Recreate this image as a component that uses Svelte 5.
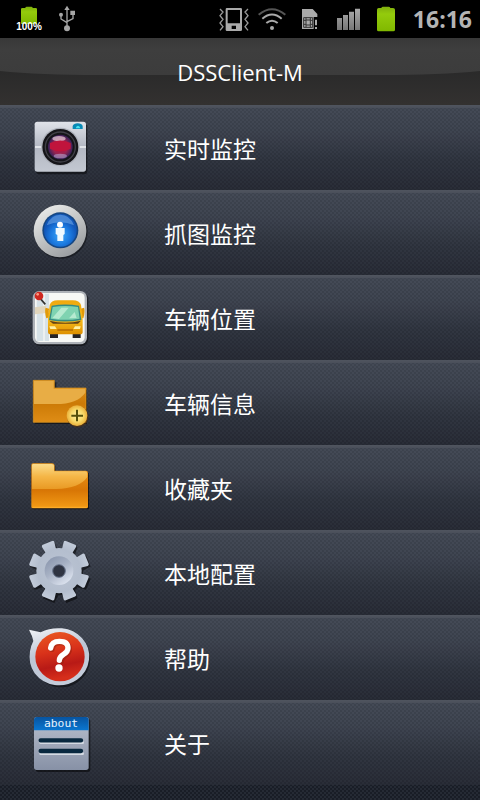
<script>
  const items = [
    { icon: "camera", label: "实时监控" },
    { icon: "info", label: "抓图监控" },
    { icon: "bus", label: "车辆位置" },
    { icon: "folder-add", label: "车辆信息" },
    { icon: "folder", label: "收藏夹" },
    { icon: "gear", label: "本地配置" },
    { icon: "help", label: "帮助" },
    { icon: "about", label: "关于" },
  ];

  const teeth = [22.5, 67.5, 112.5, 157.5, 202.5, 247.5, 292.5, 337.5];
</script>

<div class="screen">
  <header class="status">
    <div class="battery-level">
      <svg viewBox="30 0 114 114">
        <path d="M63 27q0-3 4-3h9q0-4 4-4h14q4 0 4 4h9q4 0 4 3v45H63z" fill="url(#green)" />
      </svg>
      <span>100%</span>
    </div>
    <svg viewBox="144 0 114 114" aria-label="USB">
      <g fill="none" stroke="#a6a6a6" stroke-width="4">
        <path d="M201 82V27M201 68L183 57V47M201 65L219 56V42" />
      </g>
      <path d="M201 17l8 13h-16zM211 32h14v13h-14z" fill="#a6a6a6" />
      <circle cx="183" cy="44" r="6" fill="#a6a6a6" />
      <circle cx="201" cy="85" r="9" fill="#a6a6a6" />
    </svg>

    <div class="spacer"></div>

    <!-- vibrate -->
    <svg viewBox="12 0 114 114">
      <path
        d="M48 24h41q4 0 4 4v61q0 4-4 4H48q-4 0-4-4V28q0-4 4-4zM50 30v40h37V30zM62 77v10h13V77z"
        fill="#aaa" fill-rule="evenodd"
      />
      <path
        d="M27 27l9 9-9 11 9 11-9 11 9 11-9 11M111 27l-9 9 9 11-9 11 9 11-9 11 9 11"
        fill="none" stroke="#999" stroke-width="4"
      />
    </svg>
    <!-- wifi -->
    <svg viewBox="126 0 114 114">
      <g fill="none" stroke-width="6">
        <path d="M143 44q40-33 80 0" stroke="#555" />
        <path d="M154 56q29-25 58 0" stroke="#aaa" />
        <path d="M166 69q17-14 34 0" stroke="#aaa" />
      </g>
      <circle cx="183" cy="84" r="6" fill="#aaa" />
    </svg>
    <!-- sim -->
    <svg viewBox="240 0 114 114">
      <path d="M273 27h32l14 15v9h-11v36h-35z" fill="#aaa" />
      <path d="M278 53h27v29h-27zM285 53v29M298 53v29M278 61h7M278 73h7M298 61h7M298 73h7M285 60h13M285 75h13" fill="none" stroke="#333" stroke-width="3" />
      <path d="M312 59h6v17h-6zM312 81h6v6h-6z" fill="#aaa" />
    </svg>
    <!-- signal -->
    <svg viewBox="354 0 114 114">
      <path d="M378 54h15v36h-15zM396 45h15v45h-15zM414 35h15v55h-15zM432 26h15v64h-15z" fill="url(#bars)" />
    </svg>
    <!-- battery -->
    <svg viewBox="468 0 114 114">
      <path d="M498 29q0-5 5-5h8q1-4 5-4h17q4 0 5 4h8q6 0 6 5v60q0 5-5 5h-44q-5 0-5-5z" fill="url(#green)" />
    </svg>
    <time>16:16</time>
  </header>

  <div class="title">
    <svg class="sheen" viewBox="0 0 480 67" preserveAspectRatio="none">
      <path d="M0 0H480V33Q440 37 380 37H100Q40 37 0 33z" fill="url(#sheen)" />
    </svg>
    <h1>DSSClient-M</h1>
  </div>

  <nav>
    {#each items as item}
      <button class="row" type="button">
        <svg class="icon" viewBox="0 0 270 255">
          {#if item.icon === "camera"}
            <rect x="48" y="56" width="154" height="152" rx="9" fill="#000" opacity="0.45" />
            <rect x="44" y="50" width="154" height="150" rx="8" fill="url(#silver)" />
            <path d="M45 126h30M170 126h28" stroke="#f0f2f5" stroke-width="5" />
            <path d="M158 72V63q3-8 15-8t15 8v9z" fill="#0789b5" />
            <path d="M167 70q2-8 7-8t7 8z" fill="#49e4f0" />
            <circle cx="121" cy="126" r="58" fill="#aeb2bb" />
            <circle cx="121" cy="126" r="54" fill="#151519" />
            <circle cx="121" cy="126" r="45" fill="none" stroke="#414148" stroke-width="4" />
            <circle cx="121" cy="126" r="37" fill="url(#lens)" />
            <ellipse cx="117" cy="101" rx="20" ry="8" fill="#ead5df" opacity="0.7" />
            <path d="M90 114q31-15 62 0v17q-31 16-62 0z" fill="#c0143c" />
            <ellipse cx="121" cy="153" rx="20" ry="7" fill="#b9a3ce" opacity="0.6" />
          {:else if item.icon === "info"}
            <circle cx="123" cy="126" r="80" fill="#000" opacity="0.4" />
            <circle cx="120" cy="123" r="79" fill="url(#ring)" />
            <circle cx="121" cy="121" r="54" fill="#164783" />
            <circle cx="121" cy="121" r="49" fill="url(#blue)" />
            <path d="M80 106q12-32 41-32t41 32q-41-19-82 0z" fill="#9ad0ff" opacity="0.4" />
            <circle cx="120" cy="104" r="9" fill="#fff" />
            <path d="M107 114h27v18l-4 3v18h-18v-18l-5-3z" fill="#effaff" />
          {:else if item.icon === "bus"}
            <rect x="41" y="53" width="164" height="160" rx="20" fill="#000" opacity="0.45" />
            <rect x="38" y="48" width="163" height="160" rx="20" fill="#aeb2b8" />
            <rect x="45" y="54" width="149" height="147" rx="14" fill="#f7f8f5" />
            <path d="M50 56h20v142H50zM74 56h13v142H74z" fill="#d7e2e7" />
            <path d="M45 97l34-5v22l-34 4z" fill="#e1d6bd" />
            <path d="M82 100q-3 10 2 28M187 100q3 10-2 28" fill="none" stroke="#e29a08" stroke-width="11" />
            <path d="M90 170h24v19H90zM158 170h24v19h-24z" fill="#252326" />
            <path d="M89 90q4-14 24-14h45q21 0 25 14l5 42v39q0 7-8 7H92q-8 0-8-7v-39z" fill="url(#bus)" />
            <path d="M95 92q40-7 82 0l7 43q-49 9-97 0z" fill="#358b84" />
            <path d="M98 96q38-6 76 0l5 35q-43 7-87 0z" fill="#7fd3b1" />
            <path d="M97 129l27-31h22l-29 34zM147 130l17-19 6 18z" fill="#b6ead0" />
            <path d="M88 137q48 12 95 0l-9 9H99z" fill="#634215" />
            <path d="M88 154h17l5 8H91zM182 154h-17l-5 8h20z" fill="#fff1a5" />
            <path d="M112 165h47" stroke="#ae6500" stroke-width="4" />
            <path d="M61 71l15 17" stroke="#333" stroke-width="5" />
            <circle cx="57" cy="63" r="13" fill="#cf2820" />
            <circle cx="53" cy="58" r="4" fill="#ff9b80" />
          {:else if item.icon === "folder-add"}
            <path d="M44 67h65v23h92v102H44z" fill="#000" opacity="0.5" />
            <path d="M40 61h63v23h95v103H40z" fill="url(#flat)" stroke="#e39a20" stroke-width="2" />
            <path d="M42 63h59v23h95v12q-24 34-88 34H42z" fill="#e8ad45" />
            <circle cx="173" cy="170" r="32" fill="#59320a" opacity="0.6" />
            <circle cx="171" cy="167" r="31" fill="url(#gold)" />
            <path d="M154 167h35M171 149v35" stroke="#55500b" stroke-width="6" />
          {:else if item.icon === "folder"}
            <path d="M37 64h69v20h101v109H37z" fill="#000" opacity="0.55" />
            <path d="M34 60q0-5 5-5h57q7 0 8 7v15h93q7 0 7 7v101q0 5-5 5H39q-5 0-5-5z" fill="url(#folder)" />
            <path d="M36 61q0-4 4-4h54q8 0 8 7v15h93q7 0 7 7v10q-23 34-94 36H36z" fill="url(#folder-shine)" />
            <path d="M38 187h162" stroke="#ffb02d" stroke-width="3" />
          {:else if item.icon === "gear"}
            <g opacity="0.5">
              <circle cx="121" cy="128" r="68" />
              {#each teeth as angle}
                <path d="M100 70l3-33h36l3 33z" transform="rotate({angle} 121 128)" />
              {/each}
            </g>
            <g fill="url(#gear)">
              {#each teeth as angle}
                <path
                  d="M92 76l8-20-3-19q0-5 5-5h30q5 0 5 5l-3 19 8 20z"
                  transform="rotate({angle} 117 122)"
                />
              {/each}
              <circle cx="117" cy="122" r="68" />
            </g>
            <circle cx="117" cy="122" r="43" fill="url(#hub)" />
            <circle cx="117" cy="123" r="19" fill="#2f3442" />
            <circle cx="117" cy="123" r="19" fill="none" stroke="#68748c" stroke-width="3" />
          {:else if item.icon === "help"}
            <circle cx="124" cy="130" r="87" fill="#000" opacity="0.45" />
            <path d="M27 44l35 8q29-15 64-12 36 4 60 29 26 29 21 65-5 38-36 60-31 21-67 16-37-5-60-35-20-28-14-66 3-18 10-31-3-16-13-34z" fill="url(#bubble)" />
            <circle cx="120" cy="125" r="74" fill="url(#red)" />
            <g fill="none" stroke-width="16" stroke-linecap="round">
              <path d="M96 103q3-20 26-20 26 0 26 20 0 11-13 19-12 8-12 18" stroke="#8d1d0e" opacity="0.5" />
              <path d="M92 99q3-20 26-20 26 0 26 20 0 11-13 19-13 8-13 18" stroke="#fff" />
            </g>
            <circle cx="117" cy="159" r="11" fill="#fff" />
          {:else}
            <rect x="47" y="57" width="164" height="159" rx="8" fill="#000" opacity="0.5" />
            <rect x="42" y="51" width="164" height="159" rx="8" fill="url(#panel)" />
            <path d="M42 91V59q0-8 8-8h148q8 0 8 8v32z" fill="url(#tab)" />
            <text x="123" y="81" text-anchor="middle">about</text>
            <path d="M62 128h126M62 161h126" stroke="#d4dae3" stroke-width="8" stroke-linecap="round" />
            <path d="M62 121h121M62 153h121" stroke="#08283f" stroke-width="13" stroke-linecap="round" />
          {/if}
        </svg>
        <span class="label">{item.label}</span>
      </button>
    {/each}
  </nav>

  <!-- shared gradients -->
  <svg class="defs" aria-hidden="true">
    <defs>
      <linearGradient id="green" x2="0" y2="1">
        <stop stop-color="#7fae0c" /><stop offset="0.3" stop-color="#94cb0c" /><stop offset="1" stop-color="#80b800" />
      </linearGradient>
      <linearGradient id="bars" x2="0" y2="1">
        <stop stop-color="#aaa" /><stop offset="1" stop-color="#777" />
      </linearGradient>
      <linearGradient id="sheen" x2="0" y2="1">
        <stop stop-color="#383838" /><stop offset="0.3" stop-color="#3e3e3e" /><stop offset="1" stop-color="#3c3c3c" />
      </linearGradient>
      <linearGradient id="silver" x2="0" y2="1">
        <stop stop-color="#e0e3e9" /><stop offset="0.5" stop-color="#b3b8c3" /><stop offset="1" stop-color="#c3c8d1" />
      </linearGradient>
      <radialGradient id="lens">
        <stop stop-color="#b31242" /><stop offset="0.6" stop-color="#9a2451" /><stop offset="1" stop-color="#37225a" />
      </radialGradient>
      <linearGradient id="ring" x2="0.6" y2="1">
        <stop stop-color="#f4f4f2" /><stop offset="0.55" stop-color="#c4c6c6" /><stop offset="1" stop-color="#9c9fa2" />
      </linearGradient>
      <radialGradient id="blue" cy="0.65">
        <stop stop-color="#3ca9fa" /><stop offset="0.6" stop-color="#1b79df" /><stop offset="1" stop-color="#1156b8" />
      </radialGradient>
      <linearGradient id="bus" x2="0" y2="1">
        <stop stop-color="#f0a90e" /><stop offset="0.6" stop-color="#f6b91a" /><stop offset="1" stop-color="#dd8f00" />
      </linearGradient>
      <linearGradient id="flat" x2="0" y2="1">
        <stop stop-color="#e09420" /><stop offset="0.55" stop-color="#cc7a06" /><stop offset="1" stop-color="#df8d16" />
      </linearGradient>
      <radialGradient id="gold">
        <stop stop-color="#fff0a0" /><stop offset="0.6" stop-color="#f8d969" /><stop offset="1" stop-color="#eab03a" />
      </radialGradient>
      <linearGradient id="folder" x2="0" y2="1">
        <stop stop-color="#ef9a1c" /><stop offset="0.6" stop-color="#d87605" /><stop offset="1" stop-color="#f49c16" />
      </linearGradient>
      <linearGradient id="folder-shine" x2="0" y2="1">
        <stop stop-color="#fbdc8b" /><stop offset="0.5" stop-color="#f5b647" /><stop offset="1" stop-color="#e99a24" />
      </linearGradient>
      <radialGradient id="gear" gradientUnits="userSpaceOnUse" cx="117" cy="122" r="92">
        <stop stop-color="#bcc5d4" /><stop offset="0.7" stop-color="#b4bece" /><stop offset="1" stop-color="#c3ccda" />
      </radialGradient>
      <linearGradient id="hub" x2="0.7" y2="1">
        <stop stop-color="#8390a8" /><stop offset="0.5" stop-color="#a7b1c4" /><stop offset="1" stop-color="#dce3ef" />
      </linearGradient>
      <linearGradient id="bubble" x2="0.3" y2="1">
        <stop stop-color="#f2f4f8" /><stop offset="0.5" stop-color="#bdc6d5" /><stop offset="1" stop-color="#c4ccda" />
      </linearGradient>
      <linearGradient id="red" x2="0.2" y2="1">
        <stop stop-color="#eb5b23" /><stop offset="0.45" stop-color="#d9321a" /><stop offset="0.75" stop-color="#b81a16" /><stop offset="1" stop-color="#d62e1b" />
      </linearGradient>
      <linearGradient id="panel" x2="0" y2="1">
        <stop stop-color="#b9c0ce" /><stop offset="1" stop-color="#8791a6" />
      </linearGradient>
      <linearGradient id="tab" x2="0" y2="1">
        <stop stop-color="#0754a0" /><stop offset="1" stop-color="#0a76d0" />
      </linearGradient>
    </defs>
  </svg>
</div>

<style>
  :global(body) {
    margin: 0;
    background: #20242d;
  }

  .screen {
    min-height: 100vh;
    overflow: hidden;
    background: repeating-conic-gradient(#191d26 0 25%, #252a34 0 50%) 0 0 / 4px 4px;
    color: #fff;
    font-family: "Open Sans", "Noto Sans CJK SC", sans-serif;
  }

  .status {
    display: flex;
    align-items: center;
    height: 38px;
    padding: 0 8px 0 10px;
    background: #000;
  }
  .status svg {
    display: block;
    width: 38px;
    height: 38px;
  }
  .spacer {
    flex: 1;
  }

  .battery-level {
    position: relative;
  }
  .battery-level span {
    position: absolute;
    left: 0;
    right: 0;
    bottom: 5px;
    font: bold 10px/12px "Liberation Sans", sans-serif;
    text-align: center;
  }

  time {
    margin-left: 8px;
    color: #b4b4b4;
    font-size: 23px;
    font-weight: 700;
    line-height: 38px;
  }

  .title {
    display: grid;
    height: 67px;
    background: linear-gradient(#2a2a2a 50%, #333130);
  }
  .title > * {
    grid-area: 1 / 1;
  }
  .sheen {
    width: 100%;
    height: 67px;
  }
  h1 {
    margin: 0;
    font-size: 22px;
    font-weight: 400;
    line-height: 68px;
    text-align: center;
  }

  .row {
    display: flex;
    align-items: center;
    width: 100%;
    height: 85px;
    padding: 0 20px;
    border: 0;
    background:
      linear-gradient(#50555f, #4a4f5a) 0 0 / 100% 3px no-repeat,
      repeating-conic-gradient(rgba(0, 0, 0, 0.06) 0 25%, rgba(255, 255, 255, 0.015) 0 50%) 0 0 / 4px 4px,
      linear-gradient(#424854, #3c424e 30%, #2e333e 65%, #262a34);
    color: inherit;
    font: inherit;
    text-align: left;
    cursor: pointer;
  }
  .icon {
    flex: none;
    width: 90px;
    height: 85px;
  }
  .icon text {
    fill: #e6f4ff;
    font: 34px "DejaVu Sans Mono", monospace;
  }
  .label {
    margin-left: 54px;
    font-family: "Noto Sans CJK SC", sans-serif;
    font-size: 23px;
    line-height: 34px;
  }

  .defs {
    position: absolute;
    width: 0;
    height: 0;
  }
</style>
